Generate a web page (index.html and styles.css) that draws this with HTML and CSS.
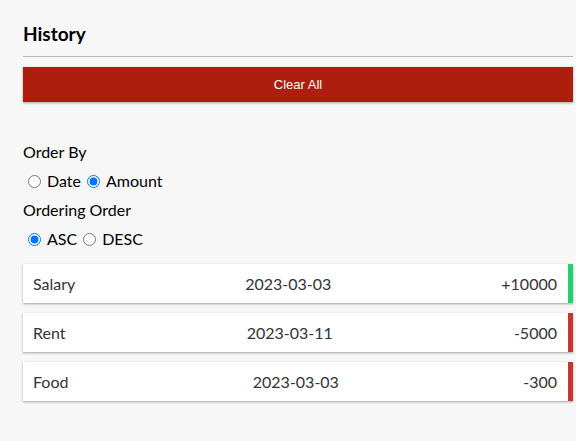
FILE: index.html
```html
<!DOCTYPE html>
<html>
<head>
<meta charset="utf-8">
<link rel="stylesheet" href="styles.css">
</head>
<body>
<div class="container">
  <h3 class="title">History</h3>
  <button class="btn-clear">Clear All</button>
  <div class="controls">
    <div class="ctl-label">Order By</div>
    <div class="ctl-row">
      <input type="radio" name="by" id="d"><label for="d">Date</label>
      <input type="radio" name="by" id="a" checked><label for="a">Amount</label>
    </div>
    <div class="ctl-label">Ordering Order</div>
    <div class="ctl-row last">
      <input type="radio" name="ord" id="asc" checked><label for="asc">ASC</label>
      <input type="radio" name="ord" id="desc"><label for="desc">DESC</label>
    </div>
  </div>
  <ul class="list">
    <li class="item plus"><span>Salary</span><span>2023-03-03</span><span>+10000</span></li>
    <li class="item minus"><span>Rent</span><span>2023-03-11</span><span>-5000</span></li>
    <li class="item minus"><span>Food</span><span>2023-03-03</span><span>-300</span></li>
  </ul>
</div>
</body>
</html>
```

FILE: styles.css
```css
html, body {
  margin: 0;
  background: #f7f7f7;
}
body {
  font-family: Lato, "Open Sans", sans-serif;
  color: #000;
}
.container {
  width: 550px;
  margin-left: 23px;
  padding-top: 22px;
}
.title {
  font-size: 19px;
  font-weight: 700;
  margin: 0 0 10px;
  padding-bottom: 11px;
  border-bottom: 1px solid #bbb;
  line-height: 23px;
}
.btn-clear {
  display: block;
  width: 100%;
  height: 35px;
  border: 0;
  background: #ae1e0e;
  color: #fff;
  font-family: "Liberation Sans", Arial, sans-serif;
  font-size: 13px;
  box-shadow: 0 1px 3px rgba(0,0,0,0.12), 0 1px 2px rgba(0,0,0,0.24);
  margin: 0;
}
.controls {
  margin-top: 40px;
  font-size: 16px;
}
.ctl-label {
  line-height: 20px;
  margin-bottom: 9px;
}
.ctl-row {
  line-height: 20px;
  margin-bottom: 9px;
  display: flex;
  align-items: center;
}
.ctl-row.last {
  margin-bottom: 15px;
}
.ctl-row input {
  margin: 0 6px 0 5px;
  width: 13px;
  height: 13px;
}
.ctl-row label {
  margin-right: 1px;
}
.list {
  list-style: none;
  padding: 0;
  margin: 0;
}
.item {
  background: #fff;
  color: #333;
  display: flex;
  justify-content: space-between;
  align-items: center;
  padding: 10px 11px 10px 10px;
  height: 39px;
  box-sizing: border-box;
  margin-bottom: 10px;
  font-size: 16px;
  box-shadow: 0 1px 3px rgba(0,0,0,0.12), 0 1px 2px rgba(0,0,0,0.24);
  border-right: 5px solid #2ecc71;
}
.item.minus {
  border-right-color: #c0392b;
}
```
